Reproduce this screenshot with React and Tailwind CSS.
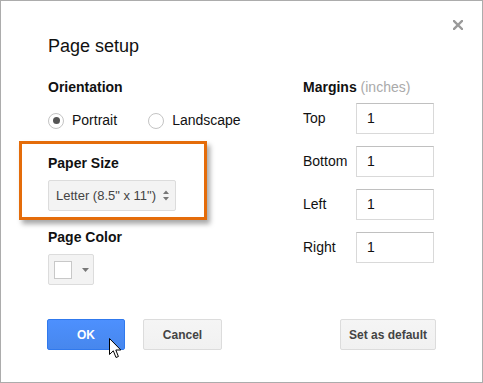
import React from 'react';

const Radio = ({ label, checked }) => (
  <label className="flex items-center">
    <span className="w-[16px] h-[16px] rounded-full border border-[#c4c4c4] bg-white flex items-center justify-center">
      {checked && <span className="w-[7px] h-[7px] rounded-full bg-[#555]" />}
    </span>
    <span className="ml-[8px] text-[14px] leading-[17px]">{label}</span>
  </label>
);

const MarginRow = ({ label }) => (
  <div className="flex items-center">
    <span className="w-[53px] text-[14px] leading-[17px]">{label}</span>
    <div className="w-[78px] h-[31px] border border-[#d9d9d9] border-t-[#c0c0c0] bg-white flex items-center pl-[10px] text-[14px]">
      1
    </div>
  </div>
);

const App = () => {
  return (
    <div className="w-[483px] h-[383px] bg-white border border-[#acacac] relative font-['Arial','Liberation_Sans',sans-serif] text-[#111]">
      {/* close */}
      <button className="absolute right-[19px] top-[19px] w-[10px] h-[10px]">
        <svg width="10" height="10" viewBox="0 0 10 10">
          <path d="M1 1 L9 9 M9 1 L1 9" stroke="#9a9a9a" strokeWidth="2.4" strokeLinecap="square" />
        </svg>
      </button>

      <div className="pt-[34px] pl-[47px] pr-[48px]">
        <h1 className="text-[18px] leading-[22px]">Page setup</h1>

        <div className="flex mt-[22px]">
          {/* left column */}
          <div className="flex flex-col">
            <div className="text-[14px] leading-[17px] font-bold">Orientation</div>
            <div className="flex items-center mt-[16px]">
              <Radio label="Portrait" checked />
              <div className="ml-[31px]">
                <Radio label="Landscape" />
              </div>
            </div>

            {/* highlighted paper size */}
            <div className="-ml-[29px] mt-[12px] w-[188px] border-[3px] border-[#e46c0a] pl-[26px] pt-[11px] pb-[6px] shadow-[3px_4px_5px_rgba(0,0,0,0.35)] bg-white">
              <div className="text-[14px] leading-[17px] font-bold">Paper Size</div>
              <div className="mt-[8px] w-[128px] h-[31px] bg-[#f3f3f3] border border-[#dcdcdc] rounded-[2px] flex items-center pl-[7px] pr-[6px] text-[13px] text-[#444]">
                <span>Letter (8.5" x 11")</span>
                <svg className="ml-auto" width="6" height="11" viewBox="0 0 6 11">
                  <path d="M0 4 L3 0.5 L6 4 Z M0 7 L3 10.5 L6 7 Z" fill="#777" />
                </svg>
              </div>
            </div>

            <div className="mt-[9px] text-[14px] leading-[17px] font-bold">Page Color</div>
            <div className="mt-[8px] w-[46px] h-[31px] bg-[#f3f3f3] border border-[#dcdcdc] rounded-[2px] flex items-center pl-[5px]">
              <span className="w-[18px] h-[18px] bg-white border border-[#c8c8c8]" />
              <svg className="ml-[10px]" width="7" height="4" viewBox="0 0 7 4">
                <path d="M0 0 L7 0 L3.5 4 Z" fill="#777" />
              </svg>
            </div>
          </div>

          {/* right column */}
          <div className="ml-auto w-[131px] flex flex-col">
            <div className="text-[14px] leading-[17px]">
              <span className="font-bold">Margins</span>{' '}
              <span className="text-[#aaa]">(inches)</span>
            </div>
            <div className="mt-[7px] flex flex-col gap-[12px]">
              <MarginRow label="Top" />
              <MarginRow label="Bottom" />
              <MarginRow label="Left" />
              <MarginRow label="Right" />
            </div>
          </div>
        </div>

        {/* buttons */}
        <div className="flex mt-[34px] -ml-px -mr-[2px]">
          <button className="w-[78px] h-[31px] rounded-[2px] border border-[#3079ed] bg-gradient-to-b from-[#4d90fe] to-[#4787ed] text-white text-[12px] font-bold">
            OK
          </button>
          <button className="ml-[18px] w-[79px] h-[31px] rounded-[2px] border border-[#dcdcdc] bg-gradient-to-b from-[#f5f5f5] to-[#f1f1f1] text-[#444] text-[12px] font-bold">
            Cancel
          </button>
          <button className="ml-auto w-[96px] h-[31px] rounded-[2px] border border-[#dcdcdc] bg-gradient-to-b from-[#f5f5f5] to-[#f1f1f1] text-[#444] text-[12px] font-bold">
            Set as default
          </button>
        </div>
      </div>

      {/* mouse pointer */}
      <svg className="absolute left-[108px] top-[337px]" width="13" height="21" viewBox="0 0 13 21">
        <path d="M0.5 0.5 L0.5 16.5 L4.3 12.8 L7 19.5 L9.4 18.5 L6.8 12 L11.8 12 Z" fill="#fff" stroke="#000" strokeWidth="1" strokeLinejoin="miter" />
      </svg>
    </div>
  );
};

export default App;
